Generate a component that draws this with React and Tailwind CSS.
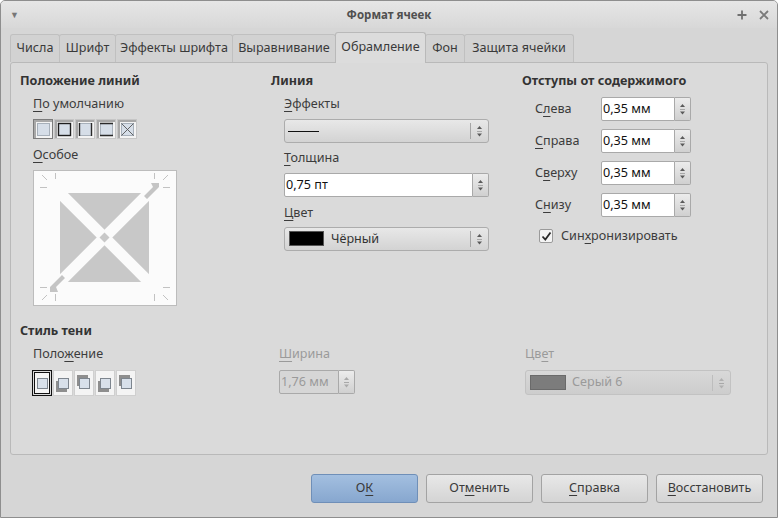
import React from "react";

const U = ({ children }) => <span className="underline underline-offset-[3px] decoration-1">{children}</span>;

const Arrows = ({ color = "#5a5a5a" }) => (
  <svg width="7" height="14" viewBox="0 0 7 14">
    <polygon points="1,5 3.5,2 6,5" fill={color} />
    <line x1="1" y1="7.5" x2="6" y2="7.5" stroke="#a8a8a8" strokeWidth="1" />
    <polygon points="1,9.5 3.5,12.5 6,9.5" fill={color} />
  </svg>
);

const DefIcon = ({ type }) => (
  <svg width="20" height="20" viewBox="0 0 20 20" className="block">
    <rect x="0" y="0" width="20" height="20" fill="#c6c6c6" />
    <rect x="1" y="1" width="18" height="18" fill="#f3f3f3" />
    <rect x="1" y="1" width="18" height="2" fill="#a8a8a8" />
    <rect x="1" y="1" width="2" height="18" fill="#a8a8a8" />
    <rect x="4.5" y="4.5" width="12" height="12" fill="#d6dee8" stroke="#a7b0ba" strokeWidth="1" />
    {type === "box" && <rect x="4.5" y="4.5" width="12" height="12" fill="none" stroke="#1e1e1e" strokeWidth="1.4" />}
    {type === "lr" && (
      <>
        <line x1="4.5" y1="4" x2="4.5" y2="17" stroke="#2a2a2a" strokeWidth="1.4" />
        <line x1="16.5" y1="4" x2="16.5" y2="17" stroke="#2a2a2a" strokeWidth="1.4" />
      </>
    )}
    {type === "tb" && (
      <>
        <line x1="4" y1="4.5" x2="17" y2="4.5" stroke="#2a2a2a" strokeWidth="1.4" />
        <line x1="4" y1="16.5" x2="17" y2="16.5" stroke="#2a2a2a" strokeWidth="1.4" />
      </>
    )}
    {type === "x" && (
      <>
        <line x1="4.5" y1="4.5" x2="16.5" y2="16.5" stroke="#555" strokeWidth="0.9" />
        <line x1="16.5" y1="4.5" x2="4.5" y2="16.5" stroke="#555" strokeWidth="0.9" />
      </>
    )}
    {type === "none" && (
      <rect x="0.5" y="0.5" width="19" height="19" fill="none" stroke="#333" strokeWidth="1" strokeDasharray="1 1" />
    )}
  </svg>
);

const ShadowIcon = ({ dx, dy, sel }) => (
  <svg width="20" height="26" viewBox="0 0 20 26" className="block">
    <rect x="0" y="0" width="20" height="26" fill="#cfcfcf" />
    <rect x="1" y="1" width="18" height="24" fill="#f4f4f4" />
    {sel && (
      <>
        <rect x="0.5" y="0.5" width="19" height="25" fill="none" stroke="#111" strokeWidth="1.2" />
        <rect x="2.5" y="2.5" width="15" height="21" fill="none" stroke="#111" strokeWidth="1" />
      </>
    )}
    {(dx !== 0 || dy !== 0) && <rect x={5 + dx} y={8 + dy} width="11" height="11" fill="#8e8e8e" />}
    <rect x="5.5" y="8.5" width="10" height="10" fill="#d8e0ea" stroke="#7d858e" strokeWidth="1" />
  </svg>
);

const Diagram = () => (
  <svg width="144" height="136" viewBox="0 0 144 136" className="block">
    <rect x="0.5" y="0.5" width="143" height="135" fill="#fbfbfb" stroke="#bcbcbc" strokeWidth="1" />
    <rect x="27" y="23" width="89" height="89" fill="#c8c8c8" />
    <line x1="22" y1="18" x2="121" y2="117" stroke="#fbfbfb" strokeWidth="11" />
    <line x1="17" y1="122" x2="126" y2="13" stroke="#fbfbfb" strokeWidth="11" />
    <polygon points="71.5,62.5 76.5,67.5 71.5,72.5 66.5,67.5" fill="#c8c8c8" />
    <polygon points="118,13 126,13 126,17 114,29 111,26 120,17" fill="#c4c4c4" />
    <polygon points="17,122 17,117 29,105 32,108 23,117 25,122" fill="#c4c4c4" />
    <g stroke="#c2c2c2" strokeWidth="1">
      <line x1="9" y1="5" x2="14" y2="10" />
      <line x1="22.5" y1="3" x2="22.5" y2="9" />
      <line x1="7" y1="17.5" x2="14" y2="17.5" />
      <line x1="130" y1="10" x2="135" y2="5" />
      <line x1="121.5" y1="3" x2="121.5" y2="9" />
      <line x1="130" y1="17.5" x2="137" y2="17.5" />
      <line x1="7" y1="117.5" x2="14" y2="117.5" />
      <line x1="9" y1="130" x2="14" y2="125" />
      <line x1="22.5" y1="124" x2="22.5" y2="131" />
      <line x1="130" y1="117.5" x2="137" y2="117.5" />
      <line x1="130" y1="125" x2="135" y2="130" />
      <line x1="121.5" y1="124" x2="121.5" y2="131" />
    </g>
  </svg>
);

const SpinInput = ({ value, className = "", disabled }) => (
  <div className={`flex h-[24px] ${className}`}>
    <div
      className={`flex-1 flex items-center pl-[1px] border border-[#a9a9a9] rounded-l-[2px] ${
        disabled ? "bg-[#d6d6d6] text-[#9a9a9a]" : "bg-white text-[#111]"
      }`}
    >
      {value}
    </div>
    <div className="w-[16px] flex items-center justify-center border border-l-0 border-[#a9a9a9] rounded-r-[2px] bg-gradient-to-b from-[#ececec] to-[#d0d0d0]">
      <Arrows color={disabled ? "#aaa" : "#5a5a5a"} />
    </div>
  </div>
);

const Combo = ({ children, className = "", disabled }) => (
  <div
    className={`flex items-center h-[24px] border border-[#acacac] rounded-[3px] bg-gradient-to-b ${
      disabled ? "from-[#d8d8d8] to-[#cdcdcd] border-[#c2c2c2]" : "from-[#e8e8e8] to-[#d3d3d3]"
    } ${className}`}
  >
    <div className="flex-1 flex items-center min-w-0">{children}</div>
    <div className={`w-px h-[16px] ${disabled ? "bg-[#bdbdbd]" : "bg-[#a5a5a5]"}`} />
    <div className="w-[17px] flex items-center justify-center">
      <Arrows color={disabled ? "#b0b0b0" : "#5a5a5a"} />
    </div>
  </div>
);

const Btn = ({ children, primary }) => (
  <div
    className={`w-[107px] h-[29px] flex items-center justify-center rounded-[3px] border text-[#3a3a3a] ${
      primary
        ? "border-[#6f8fb8] bg-gradient-to-b from-[#a3bfe0] to-[#87a7cf]"
        : "border-[#a3a3a3] bg-gradient-to-b from-[#e8e8e8] to-[#d4d4d4]"
    }`}
  >
    {children}
  </div>
);

const tabs = [
  ["Числа", "w-[50px]"],
  ["Шрифт", "w-[57px]"],
  ["Эффекты шрифта", "w-[118px]"],
  ["Выравнивание", "w-[104px]"],
  ["Обрамление", "w-[91px]"],
  ["Фон", "w-[40px]"],
  ["Защита ячейки", "w-[110px]"],
];

export default function App() {
  return (
    <div className="w-[778px] h-[518px] overflow-hidden bg-[#d6d6d6] border border-[#8e8e8e] rounded-t-[5px] flex flex-col font-['Noto_Sans',sans-serif] text-[12.6px] text-[#3c3c3c]">
      {/* Title bar */}
      <div className="h-[27px] flex items-center bg-gradient-to-b from-[#e6e6e6] to-[#d8d8d8] shrink-0">
        <div className="w-[60px] pl-[9px] text-[#777] text-[9px]">▼</div>
        <div className="flex-1 text-center font-bold text-[11.5px] text-[#505050] pt-[1px]">Формат ячеек</div>
        <div className="w-[60px] flex justify-end items-center gap-[12px] pr-[8px] text-[#777]">
          <svg width="10" height="10" viewBox="0 0 10 10">
            <path d="M5 0.5V9.5M0.5 5H9.5" stroke="#707070" strokeWidth="1.8" />
          </svg>
          <svg width="10" height="10" viewBox="0 0 10 10">
            <path d="M1 1L9 9M9 1L1 9" stroke="#7a7a7a" strokeWidth="1.8" />
          </svg>
        </div>
      </div>

      {/* Tabs */}
      <div className="h-[34px] flex items-end pl-[9px] shrink-0">
        {tabs.map(([t, w]) => {
          const sel = t === "Обрамление";
          return (
            <div
              key={t}
              className={`${w} flex items-center justify-center border border-b-0 rounded-t-[3px] -mr-px ${
                sel
                  ? "h-[31px] bg-[#dcdcdc] border-[#b9b9b9] relative z-10 -mb-px pb-[1px]"
                  : "h-[28px] bg-[#d2d2d2] border-[#c0c0c0]"
              } text-[#3a3a3a] whitespace-nowrap`}
            >
              {t}
            </div>
          );
        })}
      </div>

      {/* Panel */}
      <div className="mx-[9px] h-[393px] shrink-0 border border-[#b9b9b9] rounded-[3px] bg-[#dadada] pl-[9px] pt-[9px]">
        <div className="grid grid-cols-[251px_251px_1fr]">
          {/* Column 1 */}
          <div className="flex flex-col">
            <div className="h-[18px] leading-[18px] font-bold text-[#333]">Положение линий</div>
            <div className="h-[18px] leading-[18px] mt-[5px] ml-[13px]"><U>П</U>о умолчанию</div>
            <div className="mt-[6px] ml-[13px] flex gap-[1px]">
              <DefIcon type="none" />
              <DefIcon type="box" />
              <DefIcon type="lr" />
              <DefIcon type="tb" />
              <DefIcon type="x" />
            </div>
            <div className="h-[18px] leading-[18px] mt-[7px] ml-[13px]"><U>О</U>собое</div>
            <div className="mt-[6px] ml-[13px]">
              <Diagram />
            </div>
          </div>

          {/* Column 2 */}
          <div className="flex flex-col">
            <div className="h-[18px] leading-[18px] font-bold text-[#333]">Линия</div>
            <div className="h-[18px] leading-[18px] mt-[5px] ml-[13px]"><U>Э</U>ффекты</div>
            <Combo className="mt-[6px] ml-[13px] w-[205px]">
              <div className="ml-[3px] w-[31px] h-px bg-[#111]" />
            </Combo>
            <div className="h-[18px] leading-[18px] mt-[6px] ml-[13px]"><U>Т</U>олщина</div>
            <SpinInput value="0,75 пт" className="mt-[6px] ml-[13px] w-[205px]" />
            <div className="h-[18px] leading-[18px] mt-[7px] ml-[13px]"><U>Ц</U>вет</div>
            <Combo className="mt-[5px] ml-[13px] w-[205px]">
              <div className="ml-[4px] w-[35px] h-[15px] bg-black border border-[#555]" />
              <div className="ml-[7px] text-[#333]">Чёрный</div>
            </Combo>
          </div>

          {/* Column 3 */}
          <div className="flex flex-col">
            <div className="h-[18px] leading-[18px] font-bold text-[#333]">Отступы от содержимого</div>
            <div className="mt-[7px] ml-[13px] flex flex-col gap-[8px]">
              {[
                [<>С<U>л</U>ева</>],
                [<><U>С</U>права</>],
                [<>С<U>в</U>ерху</>],
                [<>С<U>н</U>изу</>],
              ].map(([l], i) => (
                <div key={i} className="flex items-center h-[24px]">
                  <div className="w-[66px]">{l}</div>
                  <SpinInput value="0,35 мм" className="w-[90px]" />
                </div>
              ))}
            </div>
            <div className="mt-[10px] ml-[17px] h-[18px] flex items-center">
              <div className="w-[14px] h-[14px] bg-[#f4f4f4] border border-[#9a9a9a] rounded-[2px] flex items-center justify-center">
                <svg width="11" height="11" viewBox="0 0 11 11">
                  <path d="M1.5 5.5L4.3 8.5L9.5 1.5" fill="none" stroke="#2a2a2a" strokeWidth="1.8" />
                </svg>
              </div>
              <div className="ml-[8px]">Син<U>х</U>ронизировать</div>
            </div>
          </div>
        </div>

        {/* Shadow style */}
        <div className="h-[18px] leading-[18px] font-bold text-[#333] mt-[16px]">Стиль тени</div>
        <div className="grid grid-cols-[259px_246px_1fr] mt-[5px]">
          <div className="flex flex-col pl-[13px]">
            <div className="h-[18px] leading-[18px]">Поло<U>ж</U>ение</div>
            <div className="mt-[7px] flex gap-[1px] -ml-[1px]">
              <ShadowIcon dx={0} dy={0} sel />
              <ShadowIcon dx={-2} dy={3} />
              <ShadowIcon dx={-2} dy={-3} />
              <ShadowIcon dx={-2} dy={3} />
              <ShadowIcon dx={-2} dy={-3} />
            </div>
          </div>
          <div className="flex flex-col text-[#9a9a9a]">
            <div className="h-[18px] leading-[18px]"><U>Ш</U>ирина</div>
            <SpinInput value="1,76 мм" disabled className="mt-[7px] w-[76px]" />
          </div>
          <div className="flex flex-col text-[#9a9a9a]">
            <div className="h-[18px] leading-[18px]">Цв<U>е</U>т</div>
            <Combo disabled className="mt-[7px] w-[206px] h-[25px]">
              <div className="ml-[4px] w-[36px] h-[15px] bg-[#7c7c7c] border border-[#6a6a6a]" />
              <div className="ml-[6px] text-[#9a9a9a]">Серый 6</div>
            </Combo>
          </div>
        </div>
      </div>

      {/* Buttons */}
      <div className="flex justify-end gap-[8px] pr-[14px] pt-[19px]">
        <Btn primary>О<U>К</U></Btn>
        <Btn>От<U>м</U>енить</Btn>
        <Btn><U>С</U>правка</Btn>
        <Btn><U>В</U>осстановить</Btn>
      </div>
    </div>
  );
}
